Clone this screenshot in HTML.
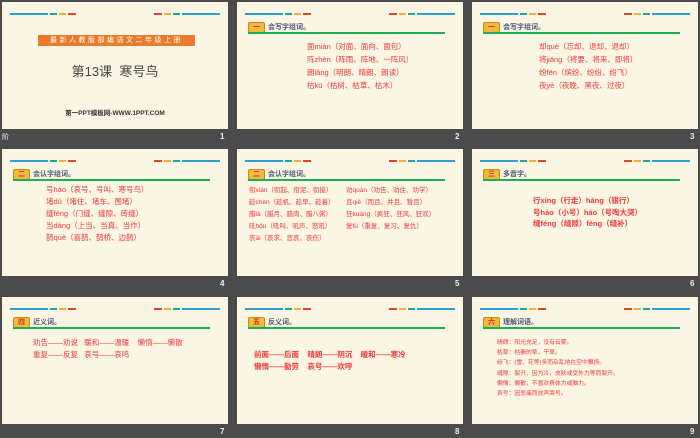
<!DOCTYPE html>
<html><head><meta charset="utf-8"><style>
*{margin:0;padding:0;box-sizing:border-box}
body{width:700px;height:438px;background:#4b4b4b;position:relative;overflow:hidden;font-family:"Liberation Sans","Noto Sans CJK SC",sans-serif}
.s{position:absolute;width:226px;height:127px;background:#fbf5e3;overflow:hidden}
.l{position:absolute;top:11px;height:2px}
.num{position:absolute;color:#eee;font-size:8px;font-weight:bold}
.ic{position:absolute;left:11px;top:20px;width:17px;height:11px;background:#f2b93f;border:1px solid #c98a1e;border-radius:2px;font-size:7px;color:#d6301c;text-align:center;line-height:9px;font-weight:bold}
.gl{position:absolute;left:11px;top:30px;width:197px;height:2px;background:#1bb152}
.ht{position:absolute;left:31px;top:20px;font-size:7px;color:#4d5a78;font-weight:bold}
.t{position:absolute;color:#ee3a3a;font-size:7.5px;white-space:nowrap}
</style></head><body>
<div id="c"></div>
<script>
const X=[2,237,472],Y=[2,149,297];
function deco(){return `<div class="l" style="left:8px;width:38px;background:#2a9fd6"></div><div class="l" style="left:48px;width:7px;background:#1aa7a0"></div><div class="l" style="left:57px;width:7px;background:#f2b23a"></div><div class="l" style="left:66px;width:8px;background:#e2452a"></div><div class="l" style="left:152px;width:8px;background:#e2452a"></div><div class="l" style="left:162px;width:7px;background:#f2b23a"></div><div class="l" style="left:171px;width:7px;background:#1aa7a0"></div><div class="l" style="left:180px;width:38px;background:#2a9fd6"></div>`}
function hd(n,t){return `<div class="ic">${n}</div><div class="gl"></div><div class="ht">${t}</div>`}
function lines(x,y,sp,arr,extra=''){return arr.map((a,i)=>`<div class="t" style="left:${x}px;top:${y+i*sp}px;${extra}">${a}</div>`).join('')}
const S=[
deco()+`<div style="position:absolute;left:36px;top:33px;width:157px;height:11px;background:#ec7a2c;color:#fff;font-size:7px;line-height:11px;text-align:center;letter-spacing:2.5px">最新人教版部编语文二年级上册</div><div style="position:absolute;left:0;width:226px;top:59px;text-align:center;font-size:13px;color:#444">第13课&nbsp;&nbsp;寒号鸟</div><div style="position:absolute;left:0;width:226px;top:105px;text-align:center;font-size:6.5px;font-weight:bold;color:#333">第一PPT模板网-WWW.1PPT.COM</div>`,
deco()+hd('一','会写字组词。')+lines(70,39,13,['面miàn（对面、面向、面包）','阵zhèn（阵雨、阵地、一阵风）','朗lǎng（明朗、晴朗、朗读）','枯kū（枯树、枯草、枯木）']),
deco()+hd('一','会写字组词。')+lines(67,39,13,['却què（忘却、退却、退却）','将jiāng（将要、将来、即将）','纷fēn（缤纷、纷纷、纷飞）','夜yè（夜晚、黑夜、过夜）']),
deco()+hd('二','会认字组词。')+lines(44,35,12,['号háo（哀号、号叫、寒号鸟）','堵dǔ（堵住、堵车、围堵）','缝fèng（门缝、缝隙、砖缝）','当dàng（上当、当真、当作）','鹊què（喜鹊、鹊桥、边鹊）']),
deco()+hd('二','会认字组词。')+lines(12,35,12,['衔xián（衔起、衔泥、衔接）','趁chèn（趁机、趁早、趁着）','腊là（腊月、腊肉、腊八粥）','吼hǒu（吼叫、吼声、怒吼）','哀āi（哀求、悲哀、哀伤）'],'font-size:6.5px')+lines(109,35,12,['劝quàn（劝告、劝住、劝学）','且qiě（而且、并且、暂且）','狂kuáng（疯狂、狂风、狂欢）','复fù（重复、复习、复仇）'],'font-size:6.5px'),
deco()+hd('三','多音字。')+lines(61,46,11.5,['行xíng（行走）háng（银行）','号hào（小号）háo（号啕大哭）','缝féng（缝隙）fèng（缝补）'],'font-weight:bold'),
deco()+hd('四','近义词。')+lines(31,40,12,['劝告——劝说&nbsp;&nbsp;&nbsp;暖和——温暖&nbsp;&nbsp;&nbsp;&nbsp;懒惰——懒散','重复——反复&nbsp;&nbsp;&nbsp;哀号——哀鸣']),
deco()+hd('五','反义词。')+lines(17,52,12,['前面——后面&nbsp;&nbsp;&nbsp;&nbsp;晴朗——阴沉&nbsp;&nbsp;&nbsp;&nbsp;暖和——寒冷','懒惰——勤劳&nbsp;&nbsp;&nbsp;&nbsp;哀号——欢呼'],'font-weight:bold'),
deco()+hd('六','理解词语。')+lines(25,40,10.2,['晴朗：阳光充足，没有云雾。','枯草：枯萎的草，干草。','纷飞：(雪、花等)多而杂乱地在空中飘扬。','缝隙：裂开、因为冷，皮肤或受外力等而裂开。','懒惰：懒散，不喜欢费体力或脑力。','哀号：因悲痛而放声哭号。'],'font-size:5.8px')
];
let h='';
S.forEach((c,i)=>{const x=X[i%3],y=Y[Math.floor(i/3)];h+=`<div class="s" style="left:${x}px;top:${y}px">${c}</div><div class="num" style="left:${x+218}px;top:${y+130}px">${i+1}</div>`});
h+=`<div class="num" style="left:2px;top:132px;font-weight:normal;font-size:7px">阶</div>`;
document.getElementById('c').innerHTML=h;
</script>
</body></html>
